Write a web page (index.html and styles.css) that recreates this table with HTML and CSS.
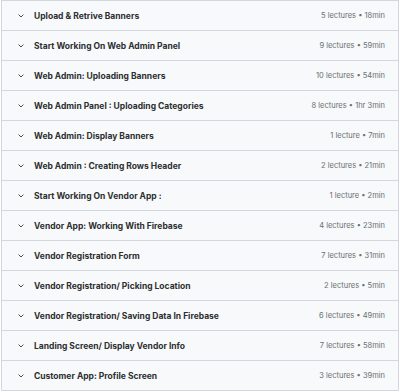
FILE: index.html
```html
<!DOCTYPE html>
<html>
<head>
<meta charset="utf-8">
<link rel="stylesheet" href="styles.css">
</head>
<body>
<div class="curriculum">
  <div class="section"><span class="chev"><svg viewBox="0 0 6 4" width="6" height="4"><path d="M0.6 0.6l2.4 2.4 2.4-2.4" fill="none" stroke="#2d2f31" stroke-width="1"/></svg></span><span class="title">Upload &amp; Retrive Banners</span><span class="meta">5 lectures • 18min</span></div>
  <div class="section"><span class="chev"><svg viewBox="0 0 6 4" width="6" height="4"><path d="M0.6 0.6l2.4 2.4 2.4-2.4" fill="none" stroke="#2d2f31" stroke-width="1"/></svg></span><span class="title">Start Working On Web Admin Panel</span><span class="meta">9 lectures • 59min</span></div>
  <div class="section"><span class="chev"><svg viewBox="0 0 6 4" width="6" height="4"><path d="M0.6 0.6l2.4 2.4 2.4-2.4" fill="none" stroke="#2d2f31" stroke-width="1"/></svg></span><span class="title">Web Admin: Uploading Banners</span><span class="meta">10 lectures • 54min</span></div>
  <div class="section"><span class="chev"><svg viewBox="0 0 6 4" width="6" height="4"><path d="M0.6 0.6l2.4 2.4 2.4-2.4" fill="none" stroke="#2d2f31" stroke-width="1"/></svg></span><span class="title">Web Admin Panel : Uploading Categories</span><span class="meta">8 lectures • 1hr 3min</span></div>
  <div class="section"><span class="chev"><svg viewBox="0 0 6 4" width="6" height="4"><path d="M0.6 0.6l2.4 2.4 2.4-2.4" fill="none" stroke="#2d2f31" stroke-width="1"/></svg></span><span class="title">Web Admin: Display Banners</span><span class="meta">1 lecture • 7min</span></div>
  <div class="section"><span class="chev"><svg viewBox="0 0 6 4" width="6" height="4"><path d="M0.6 0.6l2.4 2.4 2.4-2.4" fill="none" stroke="#2d2f31" stroke-width="1"/></svg></span><span class="title">Web Admin : Creating Rows Header</span><span class="meta">2 lectures • 21min</span></div>
  <div class="section"><span class="chev"><svg viewBox="0 0 6 4" width="6" height="4"><path d="M0.6 0.6l2.4 2.4 2.4-2.4" fill="none" stroke="#2d2f31" stroke-width="1"/></svg></span><span class="title">Start Working On Vendor App :</span><span class="meta">1 lecture • 2min</span></div>
  <div class="section"><span class="chev"><svg viewBox="0 0 6 4" width="6" height="4"><path d="M0.6 0.6l2.4 2.4 2.4-2.4" fill="none" stroke="#2d2f31" stroke-width="1"/></svg></span><span class="title">Vendor App: Working With Firebase</span><span class="meta">4 lectures • 23min</span></div>
  <div class="section"><span class="chev"><svg viewBox="0 0 6 4" width="6" height="4"><path d="M0.6 0.6l2.4 2.4 2.4-2.4" fill="none" stroke="#2d2f31" stroke-width="1"/></svg></span><span class="title">Vendor Registration Form</span><span class="meta">7 lectures • 31min</span></div>
  <div class="section"><span class="chev"><svg viewBox="0 0 6 4" width="6" height="4"><path d="M0.6 0.6l2.4 2.4 2.4-2.4" fill="none" stroke="#2d2f31" stroke-width="1"/></svg></span><span class="title">Vendor Registration/ Picking Location</span><span class="meta">2 lectures • 5min</span></div>
  <div class="section"><span class="chev"><svg viewBox="0 0 6 4" width="6" height="4"><path d="M0.6 0.6l2.4 2.4 2.4-2.4" fill="none" stroke="#2d2f31" stroke-width="1"/></svg></span><span class="title">Vendor Registration/ Saving Data In Firebase</span><span class="meta">6 lectures • 49min</span></div>
  <div class="section"><span class="chev"><svg viewBox="0 0 6 4" width="6" height="4"><path d="M0.6 0.6l2.4 2.4 2.4-2.4" fill="none" stroke="#2d2f31" stroke-width="1"/></svg></span><span class="title">Landing Screen/ Display Vendor Info</span><span class="meta">7 lectures • 58min</span></div>
  <div class="section"><span class="chev"><svg viewBox="0 0 6 4" width="6" height="4"><path d="M0.6 0.6l2.4 2.4 2.4-2.4" fill="none" stroke="#2d2f31" stroke-width="1"/></svg></span><span class="title">Customer App: Profile Screen</span><span class="meta">3 lectures • 39min</span></div>
</div>
</body>
</html>
```
FILE: styles.css
```css
html, body {
  margin: 0;
  padding: 0;
  background: #ffffff;
}
.curriculum {
  margin: 0 1px;
  border: 1px solid #d1d7dc;
  border-bottom: none;
  font-family: Inter, "Noto Sans", sans-serif;
}
.section {
  display: flex;
  align-items: center;
  height: 29px;
  padding: 0 13px 0 16px;
  background: #f7f9fa;
  border-bottom: 1px solid #d1d7dc;
}
.chev {
  display: flex;
  width: 6px;
  margin-right: 10px;
  opacity: 0.85;
}
.title {
  flex: 1;
  font-size: 8.5px;
  font-weight: 700;
  color: #2d2f31;
  white-space: nowrap;
}
.meta {
  font-size: 7.5px;
  color: #6a6f73;
  white-space: nowrap;
}
```
